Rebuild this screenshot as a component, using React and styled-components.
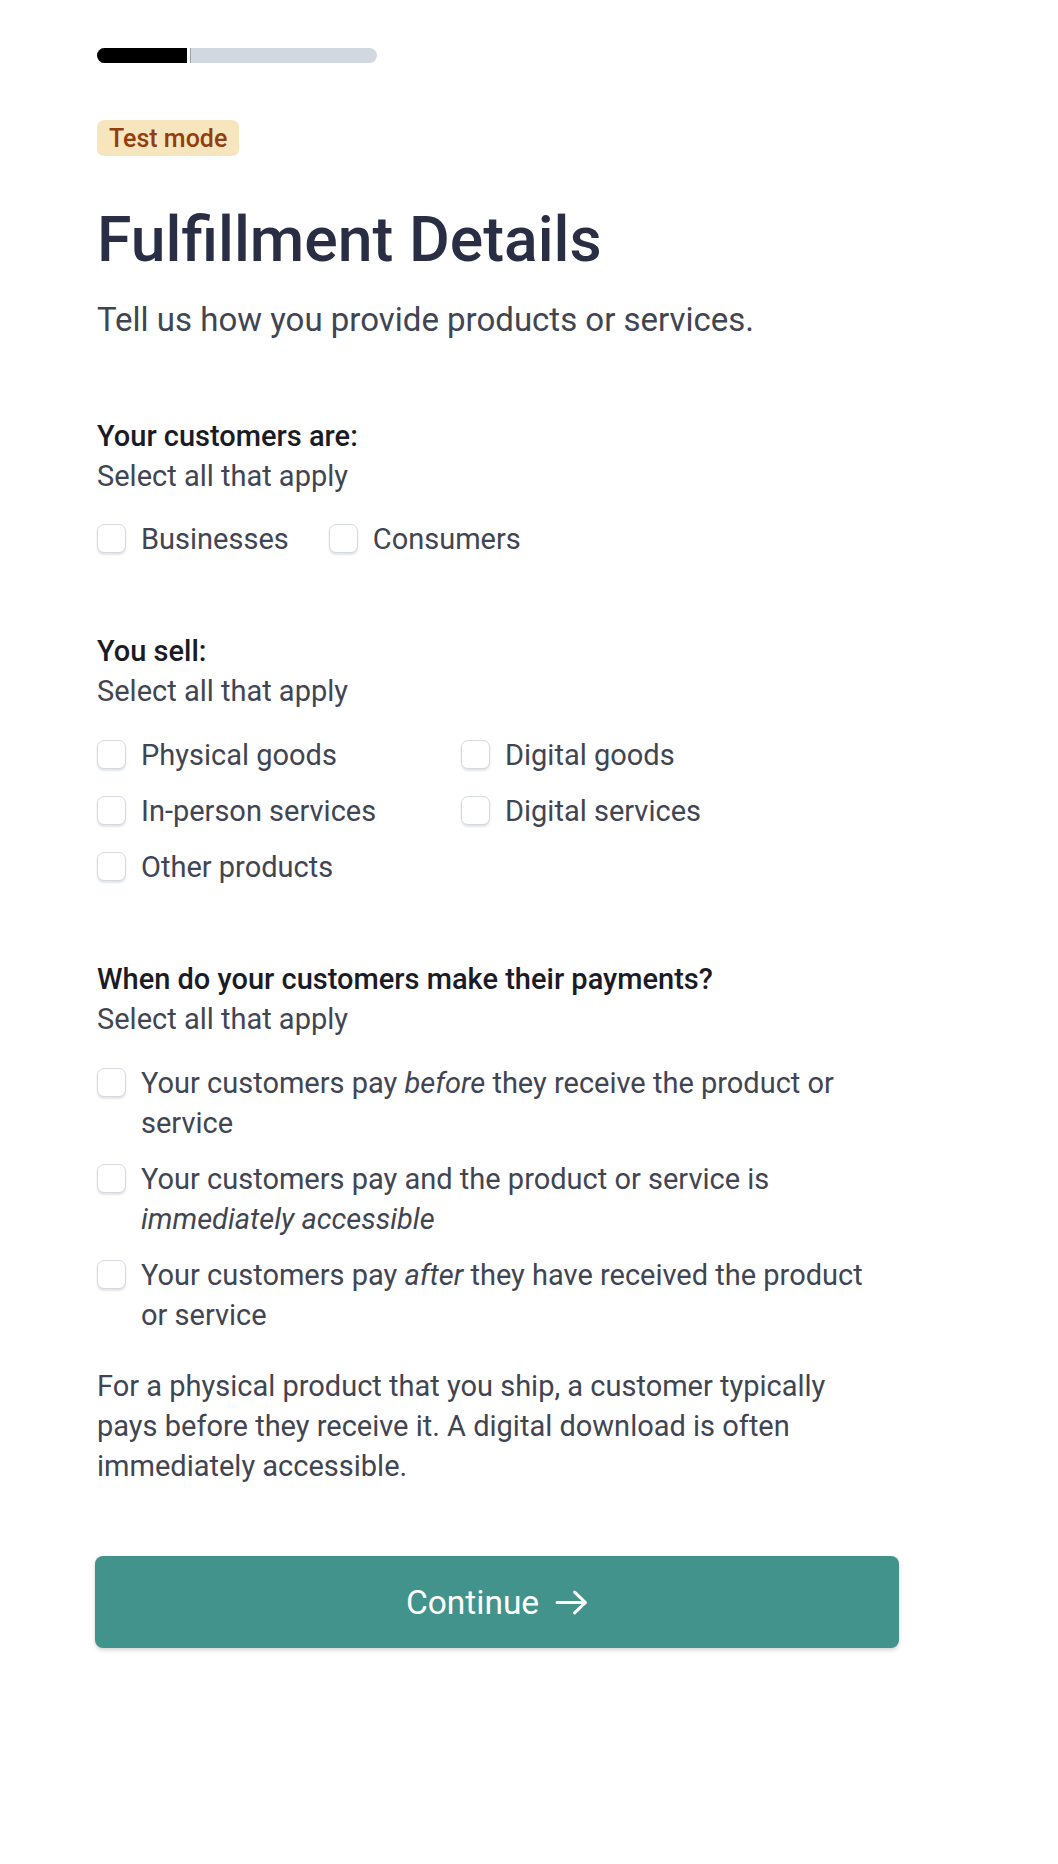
import React, { useState } from "react";
import styled, { createGlobalStyle } from "styled-components";

const GlobalStyle = createGlobalStyle`
  body {
    margin: 0;
    background: #ffffff;
    font-family: Roboto, "Noto Sans", sans-serif;
    -webkit-font-smoothing: antialiased;
  }
`;

const Page = styled.div`
  padding: 48px 0 120px 97px;
  width: 802px;
`;

const Progress = styled.div`
  display: flex;
  width: 280px;
  height: 15px;
  border-radius: 8px;
  overflow: hidden;
  background: #d2d8df;
`;

const ProgressFill = styled.div`
  width: 90px;
  background: #000;
  border-right: 3px solid #fff;
  box-shadow: 1px 0 0 #9ea3aa;
`;

const Badge = styled.span`
  display: inline-flex;
  align-items: center;
  height: 36px;
  margin-top: 57px;
  padding: 0 12px;
  border-radius: 7px;
  background: #f7e6bd;
  color: #933d10;
  font-size: 25px;
  font-weight: 500;
`;

const Title = styled.h1`
  margin: 47px 0 0;
  font-size: 62.5px;
  line-height: 74px;
  font-weight: 500;
  color: #2a2e45;
`;

const Subtitle = styled.p`
  margin: 21px 0 0;
  font-size: 33px;
  line-height: 44px;
  color: #414552;
`;

const Section = styled.section`
  margin-top: ${(p) => (p.$first ? "74px" : "72px")};
`;

const Label = styled.div`
  font-size: 29px;
  line-height: 40px;
  font-weight: 500;
  color: #1a1b25;
`;

const Hint = styled.div`
  font-size: 29px;
  line-height: 40px;
  color: #414552;
`;

const InlineOptions = styled.div`
  display: flex;
  gap: 40px;
  margin-top: 23px;
`;

const GridOptions = styled.div`
  display: grid;
  grid-template-columns: 364px auto;
  row-gap: 16px;
  margin-top: 24px;
`;

const StackOptions = styled.div`
  display: flex;
  flex-direction: column;
  gap: 16px;
  margin-top: 24px;
`;

const Option = styled.label`
  display: flex;
  align-items: flex-start;
  gap: 15px;
  font-size: 29px;
  line-height: 40px;
  color: #414552;
  cursor: pointer;
`;

const OptionText = styled.span`
  max-width: 740px;

  em {
    font-style: italic;
  }
`;

const Box = styled.span`
  flex: none;
  box-sizing: border-box;
  width: 29px;
  height: 29px;
  margin-top: 5px;
  border-radius: 7px;
  border: 1.5px solid #d5d9e0;
  background: ${(p) => (p.$checked ? "#42938b" : "#fff")};
  box-shadow: 0 2px 2px rgba(60, 66, 87, 0.14);
`;

const HiddenInput = styled.input`
  display: none;
`;

const Note = styled.p`
  margin: 31px 0 0;
  max-width: 785px;
  font-size: 29px;
  line-height: 40px;
  color: #414552;
`;

const ContinueButton = styled.button`
  display: flex;
  align-items: center;
  justify-content: center;
  gap: 16px;
  width: 804px;
  height: 92px;
  margin: 70px 0 0 -2px;
  border: none;
  border-radius: 8px;
  background: #42938b;
  color: #fff;
  font-family: Roboto, "Noto Sans", sans-serif;
  font-size: 33.5px;
  box-shadow: 0 2px 4px rgba(0, 0, 0, 0.18);
  cursor: pointer;
`;

const Check = ({ label, checked, onToggle }) => (
  <Option>
    <HiddenInput type="checkbox" checked={checked} onChange={onToggle} />
    <Box $checked={checked} />
    <OptionText>{label}</OptionText>
  </Option>
);

const ArrowIcon = () => (
  <svg width="33" height="25" viewBox="0 0 32 24" fill="none" stroke="#fff" strokeWidth="3" strokeLinecap="round" strokeLinejoin="round">
    <path d="M2 12 H29.5 M19 2 L29.5 12 L19 22" />
  </svg>
);

const App = () => {
  const [checked, setChecked] = useState({});
  const toggle = (key) => () => setChecked((c) => ({ ...c, [key]: !c[key] }));

  return (
    <Page>
      <GlobalStyle />
      <Progress>
        <ProgressFill />
      </Progress>
      <Badge>Test mode</Badge>
      <Title>Fulfillment Details</Title>
      <Subtitle>Tell us how you provide products or services.</Subtitle>

      <Section $first>
        <Label>Your customers are:</Label>
        <Hint>Select all that apply</Hint>
        <InlineOptions>
          <Check label="Businesses" checked={!!checked.biz} onToggle={toggle("biz")} />
          <Check label="Consumers" checked={!!checked.con} onToggle={toggle("con")} />
        </InlineOptions>
      </Section>

      <Section>
        <Label>You sell:</Label>
        <Hint>Select all that apply</Hint>
        <GridOptions>
          <Check label="Physical goods" checked={!!checked.pg} onToggle={toggle("pg")} />
          <Check label="Digital goods" checked={!!checked.dg} onToggle={toggle("dg")} />
          <Check label="In-person services" checked={!!checked.ips} onToggle={toggle("ips")} />
          <Check label="Digital services" checked={!!checked.ds} onToggle={toggle("ds")} />
          <Check label="Other products" checked={!!checked.op} onToggle={toggle("op")} />
        </GridOptions>
      </Section>

      <Section>
        <Label>When do your customers make their payments?</Label>
        <Hint>Select all that apply</Hint>
        <StackOptions>
          <Check
            label={<>Your customers pay <em>before</em> they receive the product or service</>}
            checked={!!checked.before}
            onToggle={toggle("before")}
          />
          <Check
            label={<>Your customers pay and the product or service is <em>immediately accessible</em></>}
            checked={!!checked.now}
            onToggle={toggle("now")}
          />
          <Check
            label={<>Your customers pay <em>after</em> they have received the product or service</>}
            checked={!!checked.after}
            onToggle={toggle("after")}
          />
        </StackOptions>
        <Note>
          For a physical product that you ship, a customer typically pays before they receive it. A digital download is
          often immediately accessible.
        </Note>
      </Section>

      <ContinueButton type="button">
        Continue <ArrowIcon />
      </ContinueButton>
    </Page>
  );
};

export default App;
